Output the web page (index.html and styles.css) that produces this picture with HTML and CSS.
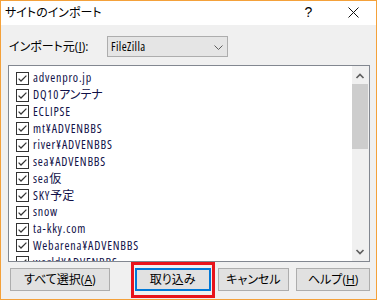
FILE: index.html
```html
<!DOCTYPE html>
<html lang="ja">
<head>
<meta charset="utf-8">
<link rel="stylesheet" href="styles.css">
</head>
<body>
<svg class="defs" width="0" height="0">
  <symbol id="chk" viewBox="0 0 13 13">
    <rect x="0.5" y="0.5" width="12" height="12" fill="#fff" stroke="#333"/>
    <path d="M2.6 6.6 L5 9 L10.4 3.6" fill="none" stroke="#333" stroke-width="1.25"/>
  </symbol>
</svg>
<div class="window">
  <div class="titlebar">
    <span class="title">サイトのインポート</span>
    <span class="tb-btn help">?</span>
    <span class="tb-btn close"><svg width="11" height="11" viewBox="0 0 11 11"><path d="M0.5 0.5 L10.5 10.5 M10.5 0.5 L0.5 10.5" stroke="#111" stroke-width="1"/></svg></span>
  </div>
  <div class="content">
    <div class="source-row">
      <span class="label">インポート元(<u>I</u>):</span>
      <div class="combo">
        <span class="combo-text">FileZilla</span>
        <svg class="combo-arrow" width="9" height="5" viewBox="0 0 9 5"><path d="M0.5 0.5 L4.5 4.5 L8.5 0.5" fill="none" stroke="#5d5d5d" stroke-width="1"/></svg>
      </div>
    </div>
    <div class="listbox">
      <div class="items">
        <div class="item"><svg class="cb"><use href="#chk"/></svg><span class="lat">advenpro.jp</span></div>
        <div class="item"><svg class="cb"><use href="#chk"/></svg><span class="lat">DQ10</span><span>アンテナ</span></div>
        <div class="item"><svg class="cb"><use href="#chk"/></svg><span class="lat">ECLIPSE</span></div>
        <div class="item"><svg class="cb"><use href="#chk"/></svg><span class="lat">mt¥ADVENBBS</span></div>
        <div class="item"><svg class="cb"><use href="#chk"/></svg><span class="lat">river¥ADVENBBS</span></div>
        <div class="item"><svg class="cb"><use href="#chk"/></svg><span class="lat">sea¥ADVENBBS</span></div>
        <div class="item"><svg class="cb"><use href="#chk"/></svg><span class="lat">sea</span><span>仮</span></div>
        <div class="item"><svg class="cb"><use href="#chk"/></svg><span class="lat">SKY</span><span>予定</span></div>
        <div class="item"><svg class="cb"><use href="#chk"/></svg><span class="lat">snow</span></div>
        <div class="item"><svg class="cb"><use href="#chk"/></svg><span class="lat">ta-kky.com</span></div>
        <div class="item"><svg class="cb"><use href="#chk"/></svg><span class="lat">Webarena¥ADVENBBS</span></div>
        <div class="item"><svg class="cb"><use href="#chk"/></svg><span class="lat">world¥ADVENBBS</span></div>
      </div>
      <div class="scrollbar">
        <div class="sb-btn up"><svg width="17" height="18" viewBox="0 0 17 18"><path d="M4.5 12 L8 8.5 L11.5 12" fill="none" stroke="#606060" stroke-width="1.7"/></svg></div>
        <div class="sb-thumb"></div>
        <div class="sb-track"></div>
        <div class="sb-btn down"><svg width="17" height="17" viewBox="0 0 17 17"><path d="M4.5 6 L8 9.5 L11.5 6" fill="none" stroke="#606060" stroke-width="1.7"/></svg></div>
      </div>
    </div>
    <div class="buttons">
      <div class="btn btn-all">すべて選択(<u>A</u>)</div>
      <div class="mark">
        <div class="btn btn-default">取り込み</div>
      </div>
      <div class="btn btn-cancel">キャンセル</div>
      <div class="btn btn-help">ヘルプ(<u>H</u>)</div>
    </div>
  </div>
</div>
</body>
</html>
```

FILE: styles.css
```css
* { box-sizing: border-box; }
html, body { margin: 0; padding: 0; }
body {
  width: 377px;
  height: 300px;
  overflow: hidden;
  font-family: "Open Sans", "Noto Sans CJK JP", sans-serif;
  font-size: 12px;
  font-feature-settings: "palt";
  color: #000;
}
.defs { position: absolute; width: 0; height: 0; }
.window {
  width: 377px;
  height: 300px;
  border: 1px solid #f4a13a;
  background: #f0f0f0;
  display: flex;
  flex-direction: column;
}
.titlebar {
  height: 24px;
  background: #fff;
  display: flex;
  align-items: center;
  flex: none;
}
.title {
  flex: 1;
  padding-left: 4px;
  line-height: 24px;
  padding-bottom: 1px;
}
.tb-btn {
  width: 45px;
  height: 24px;
  display: flex;
  align-items: center;
  justify-content: center;
}
.help {
  font-family: "Liberation Sans", sans-serif;
  font-size: 14px;
  padding-bottom: 2px;
}
.close { padding-bottom: 2px; }
.content {
  flex: 1;
  padding: 11px 6px 0 7px;
  display: flex;
  flex-direction: column;
}
.source-row {
  display: flex;
  align-items: center;
  height: 21px;
}
.label {
  width: 99px;
  padding-left: 1px;
  line-height: 21px;
}
.label u, .btn u { text-underline-offset: 1px; }
.combo {
  width: 121px;
  height: 21px;
  border: 1px solid #adadad;
  background: #e5e5e5;
  display: flex;
  align-items: center;
}
.combo-text {
  flex: 1;
  padding-left: 3px;
  line-height: 19px;
  font-stretch: 75%;
  letter-spacing: 0.4px;
}
.combo-arrow { margin-right: 4px; margin-top: 1px; }
.listbox {
  margin-top: 8px;
  width: 362px;
  height: 197px;
  border: 1px solid #828790;
  background: #fff;
  display: flex;
}
.items {
  flex: 1;
  overflow: hidden;
  padding: 4px 0 0 7px;
  color: #101048;
}
.item {
  height: 16.75px;
  display: flex;
  align-items: center;
  white-space: nowrap;
}
.cb {
  width: 13px;
  height: 13px;
  margin-right: 4px;
  flex: none;
}
.item span { line-height: 16px; }
.lat {
  font-stretch: 75%;
  letter-spacing: 0.8px;
}
.scrollbar {
  width: 17px;
  background: #f0f0f0;
  display: flex;
  flex-direction: column;
}
.sb-btn { flex: none; display: block; }
.sb-btn svg { display: block; }
.sb-btn.up { height: 18px; }
.sb-btn.down { height: 17px; }
.sb-thumb {
  height: 65px;
  margin: 0 1px 0 0;
  background: #cdcdcd;
  flex: none;
}
.sb-track { flex: 1; }
.buttons {
  margin-top: 6px;
  display: flex;
  padding-left: 2px;
}
.btn {
  height: 23px;
  border: 1px solid #adadad;
  background: #e1e1e1;
  display: flex;
  align-items: center;
  justify-content: center;
  line-height: 21px;
}
.btn-all { width: 100px; }
.mark {
  position: relative;
  margin-left: 25px;
}
.mark::after {
  content: "";
  position: absolute;
  top: -6px;
  left: -4px;
  right: -4px;
  bottom: -7px;
  border: 3px solid #e8131b;
}
.btn-default {
  width: 76px;
  border: 2px solid #0078d7;
}
.btn-cancel { width: 72px; margin-left: 7px; }
.btn-help { width: 74px; margin-left: 7px; }
```
